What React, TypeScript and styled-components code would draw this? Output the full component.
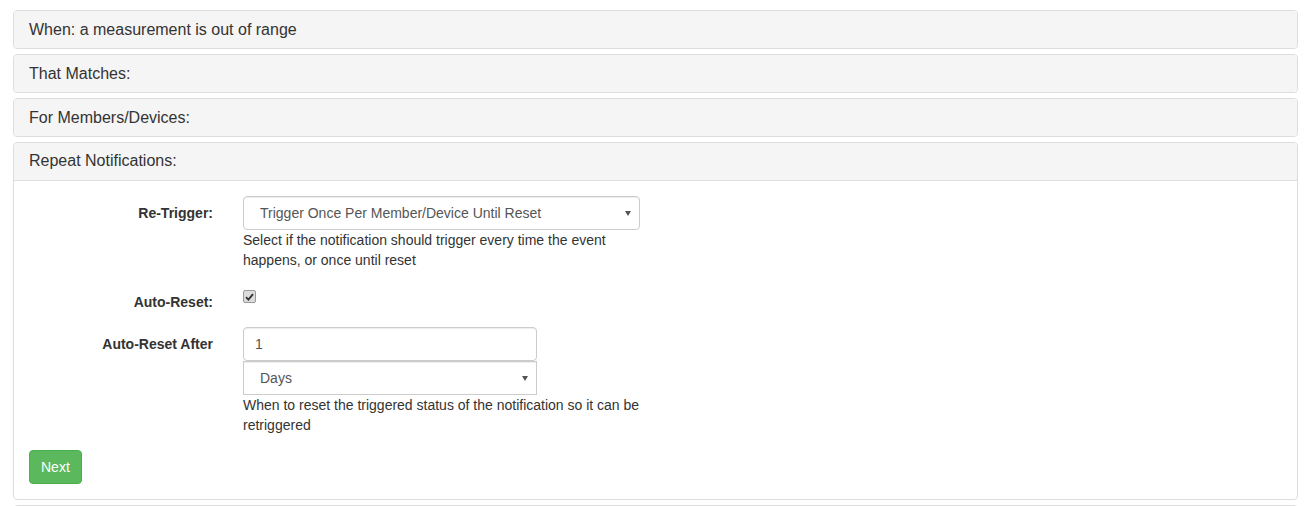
import React from "react";
import styled, { createGlobalStyle } from "styled-components";

const GlobalStyle = createGlobalStyle`
  * {
    box-sizing: border-box;
  }
  body {
    margin: 0;
    background: #fff;
    font-family: "Liberation Sans", Arial, sans-serif;
    font-size: 14px;
    line-height: 20px;
    color: #333;
  }
`;

const Page = styled.div`
  padding: 10px 6px 0 13px;
`;

const PanelGroup = styled.div`
  display: flex;
  flex-direction: column;
  gap: 5px;
`;

const Panel = styled.div`
  border: 1px solid #ddd;
  border-radius: 4px;
  background: #fff;
  overflow: hidden;
`;

const PanelHeading = styled.div<{ $open?: boolean }>`
  height: ${({ $open }) => ($open ? "38px" : "37px")};
  display: flex;
  align-items: center;
  padding: 0 15px;
  background: #f5f5f5;
  color: #333;
  font-size: 16px;
  border-bottom: ${({ $open }) => ($open ? "1px solid #ddd" : "none")};
  padding-bottom: ${({ $open }) => ($open ? "1px" : "0")};
`;

const PanelBody = styled.div`
  padding: 15px;
  display: flex;
  flex-direction: column;
  gap: 15px;
`;

const FormGroup = styled.div`
  display: flex;
  gap: 30px;
`;

const Label = styled.label`
  flex: 0 0 184px;
  padding-top: 7px;
  text-align: right;
  font-weight: bold;
  line-height: 20px;
`;

const Control = styled.div<{ $width: number }>`
  width: ${({ $width }) => $width}px;
  display: flex;
  flex-direction: column;
`;

const SelectWrap = styled.div<{ $width?: number; $square?: boolean }>`
  position: relative;
  width: ${({ $width }) => ($width ? `${$width}px` : "100%")};
  height: 34px;

  &::after {
    content: "";
    position: absolute;
    right: 9px;
    top: 15px;
    border-left: 3px solid transparent;
    border-right: 3px solid transparent;
    border-top: 5px solid #555;
    pointer-events: none;
  }

  select {
    border-radius: ${({ $square }) => ($square ? "0" : "4px")};
  }
`;

const Select = styled.select`
  appearance: none;
  width: 100%;
  height: 34px;
  padding: 0 24px 0 16px;
  border: 1px solid #ccc;
  background: #fff;
  color: #555;
  font-family: inherit;
  font-size: 14px;
  box-shadow: inset 0 1px 1px rgba(0, 0, 0, 0.075);
  outline: none;
`;

const TextInput = styled.input<{ $width: number }>`
  width: ${({ $width }) => $width}px;
  height: 34px;
  padding: 0 11px;
  border: 1px solid #ccc;
  border-radius: 4px;
  color: #555;
  font-family: inherit;
  font-size: 14px;
  box-shadow: inset 0 1px 1px rgba(0, 0, 0, 0.075);
  outline: none;
`;

const HelpBlock = styled.div`
  color: #333;
  line-height: 20px;
`;

const CheckRow = styled.div`
  height: 27px;
  display: flex;
  align-items: flex-start;
  padding-top: 5px;
`;

const CheckBox = styled.span`
  display: flex;
  align-items: center;
  justify-content: center;
  width: 13px;
  height: 13px;
  border: 1px solid #9a9a9a;
  border-radius: 2px;
  background: #dcdcdc;
`;

const Actions = styled.div`
  display: flex;
`;

const SuccessButton = styled.button`
  height: 34px;
  padding: 0 11px;
  border: 1px solid #4cae4c;
  border-radius: 4px;
  background: #5cb85c;
  color: #fff;
  font-family: inherit;
  font-size: 14px;
  cursor: pointer;
`;

const CheckMark = () => (
  <svg width="9" height="8" viewBox="0 0 9 8">
    <path d="M1 4.2 L3.4 6.6 L8 1.2" fill="none" stroke="#333" strokeWidth="1.8" />
  </svg>
);

const App = () => (
  <>
    <GlobalStyle />
    <Page>
      <PanelGroup>
        <Panel>
          <PanelHeading>When: a measurement is out of range</PanelHeading>
        </Panel>
        <Panel>
          <PanelHeading>That Matches:</PanelHeading>
        </Panel>
        <Panel>
          <PanelHeading>For Members/Devices:</PanelHeading>
        </Panel>
        <Panel>
          <PanelHeading $open>Repeat Notifications:</PanelHeading>
          <PanelBody>
            <FormGroup>
              <Label>Re-Trigger:</Label>
              <Control $width={397}>
                <SelectWrap>
                  <Select defaultValue="once">
                    <option value="every">Trigger Every Time</option>
                    <option value="once">Trigger Once Per Member/Device Until Reset</option>
                  </Select>
                </SelectWrap>
                <HelpBlock>
                  Select if the notification should trigger every time the event happens, or once
                  until reset
                </HelpBlock>
              </Control>
            </FormGroup>
            <FormGroup>
              <Label>Auto-Reset:</Label>
              <CheckRow>
                <CheckBox>
                  <CheckMark />
                </CheckBox>
              </CheckRow>
            </FormGroup>
            <FormGroup>
              <Label>Auto-Reset After</Label>
              <Control $width={397}>
                <TextInput $width={294} defaultValue="1" />
                <SelectWrap $width={294} $square>
                  <Select defaultValue="days">
                    <option value="minutes">Minutes</option>
                    <option value="hours">Hours</option>
                    <option value="days">Days</option>
                  </Select>
                </SelectWrap>
                <HelpBlock>
                  When to reset the triggered status of the notification so it can be retriggered
                </HelpBlock>
              </Control>
            </FormGroup>
            <Actions>
              <SuccessButton>Next</SuccessButton>
            </Actions>
          </PanelBody>
        </Panel>
        <Panel>
          <PanelHeading />
        </Panel>
      </PanelGroup>
    </Page>
  </>
);

export default App;
